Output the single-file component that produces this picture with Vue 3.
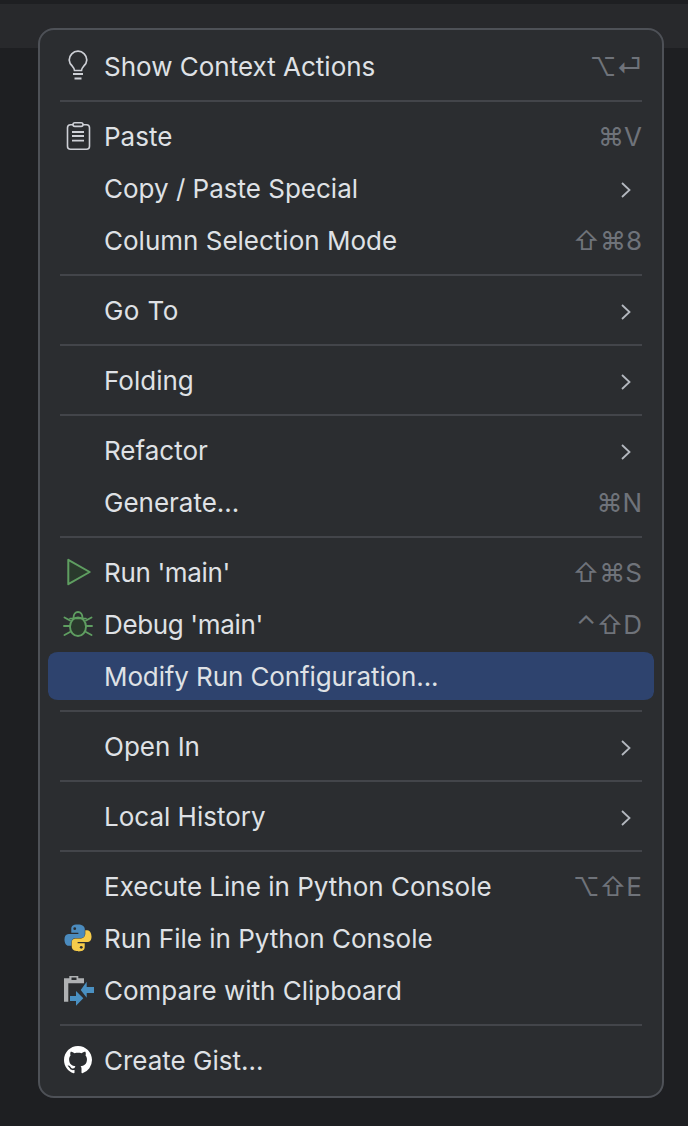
<script setup>
const groups = [
  [{ label: 'Show Context Actions', icon: 'bulb', keys: '⌥⏎' }],
  [
    { label: 'Paste', icon: 'paste', keys: '⌘V' },
    { label: 'Copy / Paste Special', more: true },
    { label: 'Column Selection Mode', keys: '⇧⌘8' },
  ],
  [{ label: 'Go To', more: true, fit: 'wide' }],
  [{ label: 'Folding', more: true }],
  [
    { label: 'Refactor', more: true },
    { label: 'Generate...', keys: '⌘N' },
  ],
  [
    { label: "Run 'main'", icon: 'run', keys: '⇧⌘S', fit: 'tight' },
    { label: "Debug 'main'", icon: 'debug', keys: '⌃⇧D', fit: 'tight' },
    { label: 'Modify Run Configuration...', active: true, fit: 'snug' },
  ],
  [{ label: 'Open In', more: true }],
  [{ label: 'Local History', more: true }],
  [
    { label: 'Execute Line in Python Console', keys: '⌥⇧E' },
    { label: 'Run File in Python Console', icon: 'python' },
    { label: 'Compare with Clipboard', icon: 'compare' },
  ],
  [{ label: 'Create Gist...', icon: 'github' }],
]
</script>

<template>
  <div class="page">
    <div class="page__topline"></div>
    <div class="page__toolbar"></div>

    <div class="menu">
      <template v-for="(group, index) in groups" :key="index">
        <div v-if="index > 0" class="menu__sep"></div>
        <div
          v-for="item in group"
          :key="item.label"
          class="menu__row"
          :class="{ 'menu__row--active': item.active }"
        >
          <span class="menu__icon">
            <svg v-if="item.icon === 'bulb'" width="32" height="32" viewBox="0 0 32 32" fill="none" stroke="#ced0d6" stroke-width="1.700">
              <path d="M12.500 20.500c-.2-1.800-.8-2.800-2.300-4.500A8.800 8.800 0 0 1 7.200 10a8.800 8.800 0 0 1 17.600 0 8.800 8.800 0 0 1-3 6c-1.500 1.700-2.100 2.700-2.300 4.500z" />
              <path d="M11 24h10M12.500 28.500h7" stroke-width="1.900" />
            </svg>
            <svg v-else-if="item.icon === 'paste'" width="32" height="32" viewBox="0 0 32 32" fill="none" stroke="#ced0d6" stroke-width="1.600">
              <rect x="5.500" y="4.800" width="22" height="24.400" rx="3" />
              <rect x="11" y="2.800" width="10" height="3.600" rx="1.800" fill="#2b2d30" />
              <path d="M10 12h12M10 16h12M10 20.700h12" stroke-width="1.800" />
            </svg>
            <svg v-else-if="item.icon === 'run'" width="32" height="32" viewBox="0 0 32 32" fill="#2a3a2c" stroke="#5f9e61" stroke-width="2" stroke-linejoin="round">
              <path d="M6.300 3.800 27.700 16 6.300 28.200z" />
            </svg>
            <svg v-else-if="item.icon === 'debug'" width="32" height="32" viewBox="0 0 32 32" fill="none" stroke="#5f9e61" stroke-width="1.900" stroke-linecap="round">
              <path d="M11.500 10c0-3.500 2-6 4.500-6s4.500 2.500 4.500 6" />
              <ellipse cx="16" cy="18.700" rx="8" ry="9.300" fill="#2a3a2c" />
              <path d="M8 10.500h16" stroke-width="1.600" />
              <path d="M2 18h6M24 18h6M2.500 9.500l5.500 3M29.500 9.500l-5.500 3M2.500 27l5.500-3M29.500 27l-5.500-3" />
            </svg>
            <svg v-else-if="item.icon === 'python'" width="28" height="28" viewBox="0 0 30 30">
              <path d="M14.800 .5C9 .5 7.800 2.700 7.800 5.500v3.800h7.600v1.300H5C2 10.600 .5 13 .5 16.500S2.200 23.300 5 23.300h3v-3.800c0-2.500 2-4.500 4.500-4.500h6c2.200 0 3.800-1.500 3.800-3.500V5.500C22.300 2.700 19.500 .5 14.800 .5z" fill="#4b8bbe" />
              <path d="M15.200 29.500c5.800 0 7-2.200 7-5v-3.800h-7.600v-1.300H25c3 0 4.500-2.400 4.500-5.900S27.800 6.700 25 6.700h-2.200v3.800c0 2.500-2 5-4.500 5h-6c-2.200 0-4 1.500-4 3.500v5c0 2.800 2.200 5 6.900 5z" fill="#f7cc4a" />
              <circle cx="11.500" cy="5" r="1.500" fill="#2b2d30" />
              <circle cx="18.500" cy="25" r="1.500" fill="#2b2d30" />
            </svg>
            <svg v-else-if="item.icon === 'compare'" width="32" height="32" viewBox="0 0 32 32">
              <path d="M2 4.300h5.300V2h9v2.300H22v5H6.300V27.700H2z" fill="#afb1b3" />
              <rect x="9.500" y="3.500" width="5" height="2.500" fill="#2b2d30" />
              <path d="M18.700 16l6-8.300V13H32v6h-7.300v4.700z" fill="#4a90c2" />
              <path d="M21.300 24.300 14 17v5H8v5h6v4.700z" fill="#4a90c2" />
            </svg>
            <svg v-else-if="item.icon === 'github'" width="28" height="28" viewBox="0 0 16 16" fill="#fff">
              <path d="M8 0C3.580 0 0 3.580 0 8c0 3.540 2.290 6.530 5.470 7.590.4.070.55-.17.55-.38 0-.19-.01-.82-.01-1.490-2.010.37-2.530-.49-2.690-.94-.09-.23-.48-.94-.82-1.130-.28-.15-.68-.52-.01-.53.63-.01 1.080.58 1.230.82.720 1.210 1.870.87 2.330.66.070-.52.280-.87.510-1.070-1.780-.2-3.640-.89-3.640-3.950 0-.87.310-1.590.820-2.150-.08-.2-.36-1.020.08-2.120 0 0 .67-.21 2.200.82.640-.18 1.320-.27 2-.27s1.360.09 2 .27c1.530-1.040 2.200-.82 2.200-.82.440 1.100.160 1.920.080 2.120.510.560.820 1.270.820 2.150 0 3.070-1.870 3.750-3.650 3.950.290.250.540.730.540 1.480 0 1.070-.01 1.930-.01 2.200 0 .21.150.46.550.38A8.010 8.010 0 0 0 16 8c0-4.420-3.580-8-8-8z" />
            </svg>
          </span>
          <span class="menu__label" :class="item.fit && `menu__label--${item.fit}`">{{ item.label }}</span>
          <span v-if="item.keys" class="menu__keys">{{ item.keys }}</span>
          <svg v-if="item.more" class="menu__more" width="10" height="16" viewBox="0 0 10 16" fill="none" stroke="#b4b8bf" stroke-width="1.800">
            <path d="M1 1l7.500 7L1 15" />
          </svg>
        </div>
      </template>
    </div>
  </div>
</template>

<style scoped>
.page {
  position: relative;
  width: 688px;
  height: 1126px;
  overflow: hidden;
  background: #1e1f22;
  font-family: Inter, "Noto Sans", sans-serif;
}

.page__topline {
  height: 4px;
  background: #1e1f22;
}

.page__toolbar {
  height: 44px;
  background: #28292c;
}

.menu {
  position: absolute;
  top: 28px;
  left: 38px;
  width: 626px;
  height: 1070px;
  box-sizing: border-box;
  padding: 10px 8px;
  background: #2b2d30;
  border: 2px solid #4e5157;
  border-radius: 16px;
}

.menu__row {
  display: flex;
  align-items: center;
  box-sizing: border-box;
  height: 52px;
  padding: 0 12px 0 14px;
  border-radius: 10px;
  color: #dfe1e5;
  font-size: 26px;
  font-optical-sizing: none;
}

.menu__row--active {
  border-block: 2px solid transparent;
  background: #2e436e;
  background-clip: padding-box;
}

.menu__icon {
  display: flex;
  align-items: center;
  justify-content: center;
  flex: none;
  width: 32px;
  height: 32px;
  margin-right: 10px;
}

.menu__icon svg {
  overflow: visible;
}

.menu__label {
  flex: 1;
  white-space: nowrap;
}

.menu__label--tight {
  letter-spacing: -0.35px;
}

.menu__label--snug {
  letter-spacing: -0.11px;
}

.menu__label--wide {
  letter-spacing: 0.4px;
}

.menu__keys {
  color: #6f737a;
  white-space: nowrap;
  font-size: 26px;
}

.menu__more {
  margin: 3px 11px 0 0;
}

.menu__sep {
  height: 18px;
  margin: 0 12px;
  background: linear-gradient(#43454a, #43454a) center / 100% 2px no-repeat;
}
</style>
